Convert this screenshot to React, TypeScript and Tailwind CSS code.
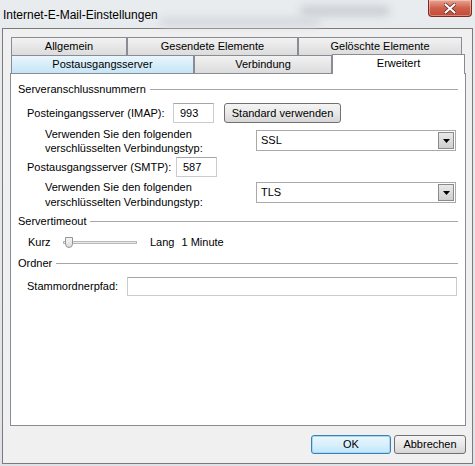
const font = { fontFamily: '"Liberation Sans", Arial, sans-serif' };

function SectionHeader({ label }: { label: string }) {
  return (
    <div className="flex h-[14px] items-center">
      <span className="whitespace-nowrap leading-[14px]">{label}</span>
      <div className="ml-[4px] h-px flex-1 bg-[#a7a7a7]" />
    </div>
  );
}

function TextBox({ value, className }: { value?: string; className: string }) {
  return (
    <div
      className={`flex shrink-0 items-center border border-[#c9ccd2] border-t-[#a3a6ad] bg-white pl-[6px] ${className}`}
    >
      {value}
    </div>
  );
}

function ComboBox({ value }: { value: string }) {
  return (
    <div className="flex h-[21px] w-[200px] items-center border border-[#a9a9a9] bg-white pl-[4px] pr-[1px]">
      <span className="flex-1">{value}</span>
      <div className="flex h-[17px] w-[16px] items-center justify-center border border-[#8a8a8a] bg-gradient-to-b from-[#e9e9e9] to-[#cfcfcf]">
        <svg width="7" height="4" viewBox="0 0 7 4">
          <path d="M0 0h7L3.5 4z" fill="#000" />
        </svg>
      </div>
    </div>
  );
}

function Tab({
  label,
  width,
  variant = 'normal',
}: {
  label: string;
  width: string;
  variant?: 'normal' | 'hover' | 'active';
}) {
  if (variant === 'active') {
    return (
      <div
        className={`relative z-10 -mt-px h-[20px] ${width} border border-b-0 border-[#898c95] bg-white text-center leading-[16px]`}
      >
        {label}
      </div>
    );
  }
  const bg =
    variant === 'hover'
      ? 'bg-gradient-to-b from-[#eaf6fd] to-[#c4e5f6]'
      : 'bg-gradient-to-b from-[#f2f2f2] to-[#dcdcdc]';
  return (
    <div
      className={`h-[18px] ${width} border border-b-0 border-[#898c95] ${bg} text-center leading-[17px]`}
    >
      {label}
    </div>
  );
}

export default function App() {
  return (
    <div
      className="relative h-[466px] w-[475px] overflow-hidden bg-gradient-to-b from-[#e9ecef] to-[#dfe3e7] text-[11px] text-black"
      style={font}
    >
      {/* Title bar */}
      <div className="relative h-[28px]">
        <div className="absolute left-[300px] top-[6px] h-[10px] w-[90px] rounded-full bg-[#c9ced3] blur-[4px]" />
        <div className="absolute left-[160px] top-[18px] h-[8px] w-[160px] rounded-full bg-[#d2d6da] blur-[4px]" />
        <span className="absolute left-[3px] top-[6px] text-[12px] text-black">
          Internet-E-Mail-Einstellungen
        </span>
        <div className="absolute right-[3px] top-0 flex h-[17px] w-[44px] items-center justify-center rounded-b-[4px] border border-t-0 border-[#7a2a20] bg-gradient-to-b from-[#e8a493] via-[#d0604c] to-[#c24a35] shadow-[inset_0_0_0_1px_rgba(255,255,255,0.35)]">
          <svg width="12" height="11" viewBox="0 0 12 11">
            <path
              d="M1.5 1.5l9 8M10.5 1.5l-9 8"
              stroke="#5a1c12"
              strokeWidth="3.4"
              strokeLinecap="round"
            />
            <path
              d="M1.5 1.5l9 8M10.5 1.5l-9 8"
              stroke="#fff"
              strokeWidth="2.2"
              strokeLinecap="round"
            />
          </svg>
        </div>
      </div>

      {/* Client area */}
      <div className="ml-[2px] h-[436px] w-[471px] border border-[#7b7b7b] bg-[#f0f0f0]">
        <div className="ml-[7px] mt-[8px] w-[456px]">
          {/* Tabs */}
          <div className="flex pl-[1px]">
            <Tab label="Allgemein" width="w-[116px]" />
            <Tab label="Gesendete Elemente" width="w-[171px]" />
            <Tab label="Gelöschte Elemente" width="w-[164px]" />
          </div>
          <div className="flex h-[18px] pl-[1px]">
            <Tab label="Postausgangsserver" width="w-[183px]" variant="hover" />
            <Tab label="Verbindung" width="w-[138px]" />
            <Tab label="Erweitert" width="w-[133px]" variant="active" />
          </div>

          {/* Panel */}
          <div className="h-[353px] border border-[#898c95] bg-white pl-[7px] pr-[7px] pt-[8px]">
            <SectionHeader label="Serveranschlussnummern" />

            <div className="mt-[7px] flex h-[20px] items-center pl-[9px]">
              <span className="w-[146px] shrink-0 whitespace-nowrap">Posteingangsserver (IMAP):</span>
              <TextBox value="993" className="h-[20px] w-[41px]" />
              <button className="ml-[10px] h-[20px] w-[117px] shrink-0 rounded-[3px] border border-[#707070] bg-gradient-to-b from-[#f4f4f4] via-[#e9e9e9] to-[#d6d6d6] leading-[18px]">
                Standard verwenden
              </button>
            </div>

            <div className="mt-[4px] flex items-start pl-[27px]">
              <div className="w-[211px] shrink-0 whitespace-nowrap leading-[14px]">
                Verwenden Sie den folgenden
                <br />
                verschlüsselten Verbindungstyp:
              </div>
              <div className="mt-[3px]">
                <ComboBox value="SSL" />
              </div>
            </div>

            <div className="mt-[2px] flex h-[20px] items-center pl-[9px]">
              <span className="w-[149px] shrink-0 whitespace-nowrap">Postausgangsserver (SMTP):</span>
              <TextBox value="587" className="h-[20px] w-[41px]" />
            </div>

            <div className="mt-[3px] flex items-start pl-[27px]">
              <div className="w-[211px] shrink-0 whitespace-nowrap leading-[14.5px]">
                Verwenden Sie den folgenden
                <br />
                verschlüsselten Verbindungstyp:
              </div>
              <div className="mt-[2px]">
                <ComboBox value="TLS" />
              </div>
            </div>

            <div className="mt-[5px]">
              <SectionHeader label="Servertimeout" />
            </div>

            <div className="mt-[6px] flex h-[16px] items-center pl-[10px]">
              <span className="w-[35px]">Kurz</span>
              <div className="relative h-[16px] w-[74px]">
                <div className="absolute left-0 right-0 top-[7px] h-[3px] border border-[#b7b7b7] bg-[#e7eaea]" />
                <div className="absolute left-[2px] top-[3px] h-[11px] w-[8px] rounded-b-[4px] border border-[#959595] bg-gradient-to-b from-[#f5f5f5] to-[#dcdcdc]" />
              </div>
              <span className="ml-[13px]">Lang</span>
              <span className="ml-[7px]">1 Minute</span>
            </div>

            <div className="mt-[6px]">
              <SectionHeader label="Ordner" />
            </div>

            <div className="mt-[7px] flex h-[19px] items-center pl-[9px]">
              <span className="w-[100px] shrink-0 whitespace-nowrap">Stammordnerpfad:</span>
              <TextBox className="h-[19px] w-[330px]" />
            </div>
          </div>
        </div>

        {/* Buttons */}
        <div className="mt-[9px] flex justify-end gap-[3px] pr-[6px]">
          <button className="h-[19px] w-[80px] rounded-[3px] border border-[#3c7fb1] bg-gradient-to-b from-[#eaf6fd] via-[#d9f0fc] to-[#bee6fd] shadow-[inset_0_0_0_1px_#a7d9f5] leading-[17px]">
            OK
          </button>
          <button className="h-[19px] w-[72px] rounded-[3px] border border-[#707070] bg-gradient-to-b from-[#f4f4f4] via-[#e9e9e9] to-[#d6d6d6] leading-[17px]">
            Abbrechen
          </button>
        </div>
      </div>
    </div>
  );
}
